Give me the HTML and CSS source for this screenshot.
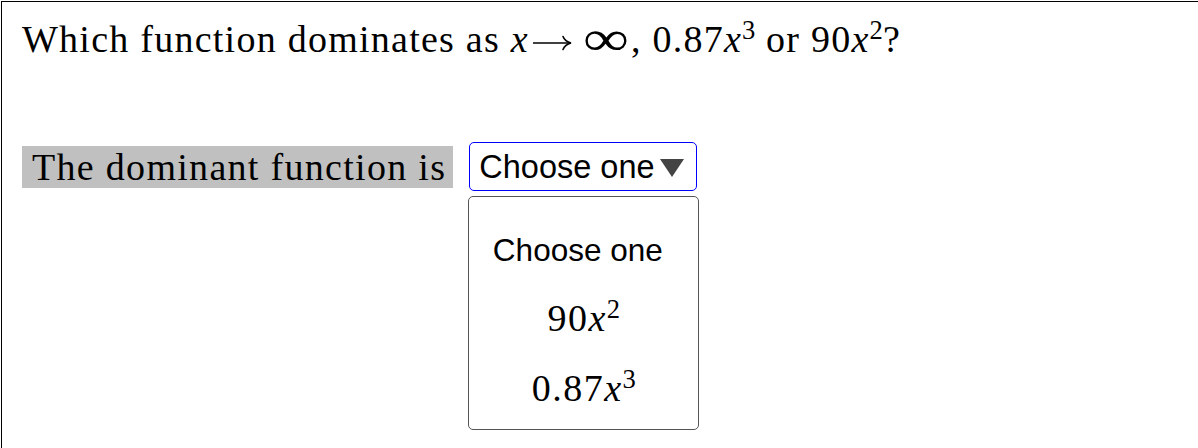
FILE: index.html
```html
<!DOCTYPE html>
<html>
<head>
<meta charset="utf-8">
<link rel="stylesheet" href="styles.css">
</head>
<body>
<div class="frame">
  <p class="question">Which function dominates as <i class="mv">x</i><svg class="arrow" width="40" height="20" viewBox="0 0 40 20" aria-label="→"><path d="M1 10 H38" stroke="#000" stroke-width="1.7" fill="none"/><path d="M31 3.5 Q33 8.5 39 10 Q33 11.5 31 16.5" stroke="#000" stroke-width="1.6" fill="none" stroke-linecap="round"/></svg><span class="inf">∞</span>, 0.87<i class="mv">x</i><sup>3</sup> or 90<i class="mv">x</i><sup>2</sup>?</p>
  <div class="answer-row">
    <span class="prompt">The dominant function is</span>
    <div class="select-wrap">
      <div class="select">Choose one<span class="caret"></span></div>
      <ul class="menu">
        <li class="opt sans">Choose one</li>
        <li class="opt">90<i class="mv">x</i><sup>2</sup></li>
        <li class="opt">0.87<i class="mv">x</i><sup>3</sup></li>
      </ul>
    </div>
  </div>
</div>
</body>
</html>
```
FILE: styles.css
```css
html, body {
  margin: 0;
  padding: 0;
  background: #fff;
}
body {
  padding: 1px 0 0 1px;
  height: 448px;
  box-sizing: border-box;
  overflow: hidden;
}
.frame {
  border-top: 1px solid #000;
  border-left: 1px solid #000;
  height: 460px;
  padding: 0 0 0 20px;
  font-family: "Liberation Serif", "DejaVu Serif", serif;
  color: #000;
}
.question {
  margin: 0;
  padding-top: 14px;
  font-size: 38px;
  letter-spacing: 1.25px;
  line-height: 46px;
  white-space: nowrap;
}
.mv {
  font-style: italic;
}
.arrow {
  vertical-align: -1px;
  margin: 0 9px 0 3px;
}
.inf {
  font-family: "Liberation Serif", serif;
  font-size: 38px;
  letter-spacing: 0;
  display: inline-block;
  width: 50px;
  text-align: center;
  transform: scale(1.7, 1.3);
  transform-origin: 50% 60%;
}
sup {
  font-size: 0.7em;
  line-height: 0;
  vertical-align: 0.5em;
  letter-spacing: 0;
}
.answer-row {
  display: flex;
  align-items: center;
  gap: 16px;
  margin-top: 80px;
}
.prompt {
  background: #c0c0c0;
  font-size: 38px;
  letter-spacing: 1.3px;
  line-height: 42px;
  padding: 0 7px 0 10px;
  white-space: nowrap;
}
.select-wrap {
  position: relative;
}
.select {
  box-sizing: border-box;
  height: 49px;
  width: 228px;
  border: 1.5px solid #0000ff;
  border-radius: 5px;
  font-family: "Liberation Sans", Arial, sans-serif;
  font-size: 32.5px;
  line-height: 46px;
  padding-left: 9px;
  display: flex;
  align-items: center;
}
.caret {
  width: 0;
  height: 0;
  border-left: 12px solid transparent;
  border-right: 12px solid transparent;
  border-top: 18px solid #444;
  margin-left: 5px;
  margin-top: 2px;
}
.menu {
  position: absolute;
  left: -1px;
  top: 54px;
  width: 231px;
  height: 234px;
  box-sizing: border-box;
  margin: 0;
  padding: 20px 12px 0 0;
  list-style: none;
  border: 1.5px solid #555;
  border-radius: 5px;
  background: #fff;
}
.opt {
  text-align: center;
  font-size: 38px;
  letter-spacing: 1.5px;
  height: 70px;
  line-height: 70px;
}
.opt:not(.sans) {
  margin-right: -12px;
}
.opt.sans {
  font-family: "Liberation Sans", Arial, sans-serif;
  font-size: 31.5px;
  letter-spacing: 0;
  height: 66px;
  line-height: 66px;
}
```
